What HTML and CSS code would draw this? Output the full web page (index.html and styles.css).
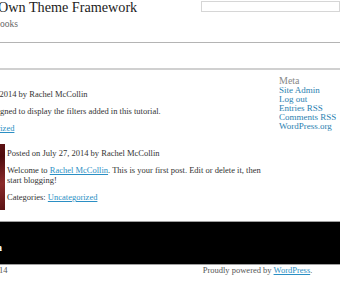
FILE: index.html
```html
<!DOCTYPE html>
<html>
<head>
	<meta charset="utf-8">
	<meta name="viewport" content="width=device-width, initial-scale=1">
	<title>Own Theme Framework</title>
	<link rel="stylesheet" href="styles.css">
</head>
<body>
	<header class="site-header">
		<div class="branding">
			<h1 class="site-title">Own Theme Framework</h1>
			<p class="site-desc">ooks</p>
		</div>
		<form class="search" onsubmit="return false">
			<input type="search" class="search-field">
		</form>
	</header>
	<nav class="site-nav"></nav>

	<div class="site-main">
		<div class="content">
			<article class="post">
				<p class="entry-meta">Posted on July 27, 2014 by Rachel McCollin</p>
				<p>This section is designed to display the filters added in this tutorial.</p>
				<p class="cats">Categories: <a href="#">Uncategorized</a></p>
			</article>
			<article class="post post-thumb">
				<div class="thumb"></div>
				<div class="post-body">
					<p class="entry-meta">Posted on July 27, 2014 by Rachel McCollin</p>
					<p>Welcome to <a href="#">Rachel McCollin</a>. This is your first post. Edit or delete it, then start blogging!</p>
					<p>Categories: <a href="#">Uncategorized</a></p>
				</div>
			</article>
		</div>
		<aside class="sidebar">
			<h3 class="widget-title">Meta</h3>
			<ul class="widget-list">
				<li><a href="#">Site Admin</a></li>
				<li><a href="#">Log out</a></li>
				<li><a href="#">Entries RSS</a></li>
				<li><a href="#">Comments RSS</a></li>
				<li><a href="#">WordPress.org</a></li>
			</ul>
		</aside>
	</div>

	<footer class="site-footer">
		<div class="footer-widgets"><span class="footer-text">a</span></div>
		<div class="site-info">
			<span class="copyright">14</span>
			<span class="credit">Proudly powered by <a href="#">WordPress</a>.</span>
		</div>
	</footer>
</body>
</html>
```

FILE: styles.css
```css
* {
	margin: 0;
	padding: 0;
	box-sizing: border-box;
}

body {
	width: 340px;
	height: 286px;
	overflow: hidden;
	background: #fff;
	color: #333;
	font-family: "Liberation Serif", "Times New Roman", serif;
	font-size: 8.5px;
}

a {
	color: #2b8fc4;
}

/* header */
.site-header {
	display: flex;
	justify-content: space-between;
	height: 43px;
	border-bottom: 1px solid #b4b4b4;
}
.site-title {
	margin-left: -2px;
	font-size: 14.2px;
	line-height: 15px;
	font-weight: normal;
	color: #222;
}
.site-desc {
	margin-top: 3px;
	font-size: 9.5px;
	line-height: 12px;
	color: #666;
}
.search {
	padding-top: 1px;
}
.search-field {
	display: block;
	width: 139px;
	height: 11px;
	border: 1px solid #d6d6d6;
	background: #fff;
}

.site-nav {
	height: 27px;
	border-bottom: 2px solid #d0d0d0;
}

/* main */
.site-main {
	display: flex;
	height: 151px;
}
.content {
	flex: 0 0 335px;
	margin-left: -65px;
	padding-top: 19px;
}
.post p {
	line-height: 10px;
	margin-bottom: 7px;
}
.post .cats {
	text-indent: -11px;
}
.post-thumb {
	display: flex;
	margin-top: 11px;
}
.thumb {
	flex: 0 0 70px;
	height: 66px;
	margin-right: 2px;
	background: linear-gradient(160deg, #7a1c1c 0%, #4e0c0e 40%, #8a2a2a 70%, #5a1214 100%);
}
.post-body {
	padding-top: 4px;
}

.sidebar {
	margin-left: 9px;
	padding-top: 6px;
}
.widget-title {
	font-size: 10px;
	line-height: 10px;
	font-weight: normal;
	color: #888;
}
.widget-list {
	list-style: none;
	font-size: 9px;
	line-height: 9px;
}
.widget-list a {
	color: #2b7fb0;
	text-decoration: none;
}

/* footer */
.footer-widgets {
	height: 44px;
	background: #000;
	border-top: 1px solid #a0a0a0;
	border-bottom: 1px solid #a0a0a0;
	padding-top: 20px;
}
.footer-text {
	display: block;
	margin-left: -3px;
	color: #fff;
	font-size: 10px;
	font-weight: bold;
}
.site-info {
	display: flex;
	line-height: 10px;
	color: #555;
}
.copyright {
	flex: 0 0 176px;
	margin-left: -1px;
}
.credit {
	flex: 1;
	text-align: center;
}
```
